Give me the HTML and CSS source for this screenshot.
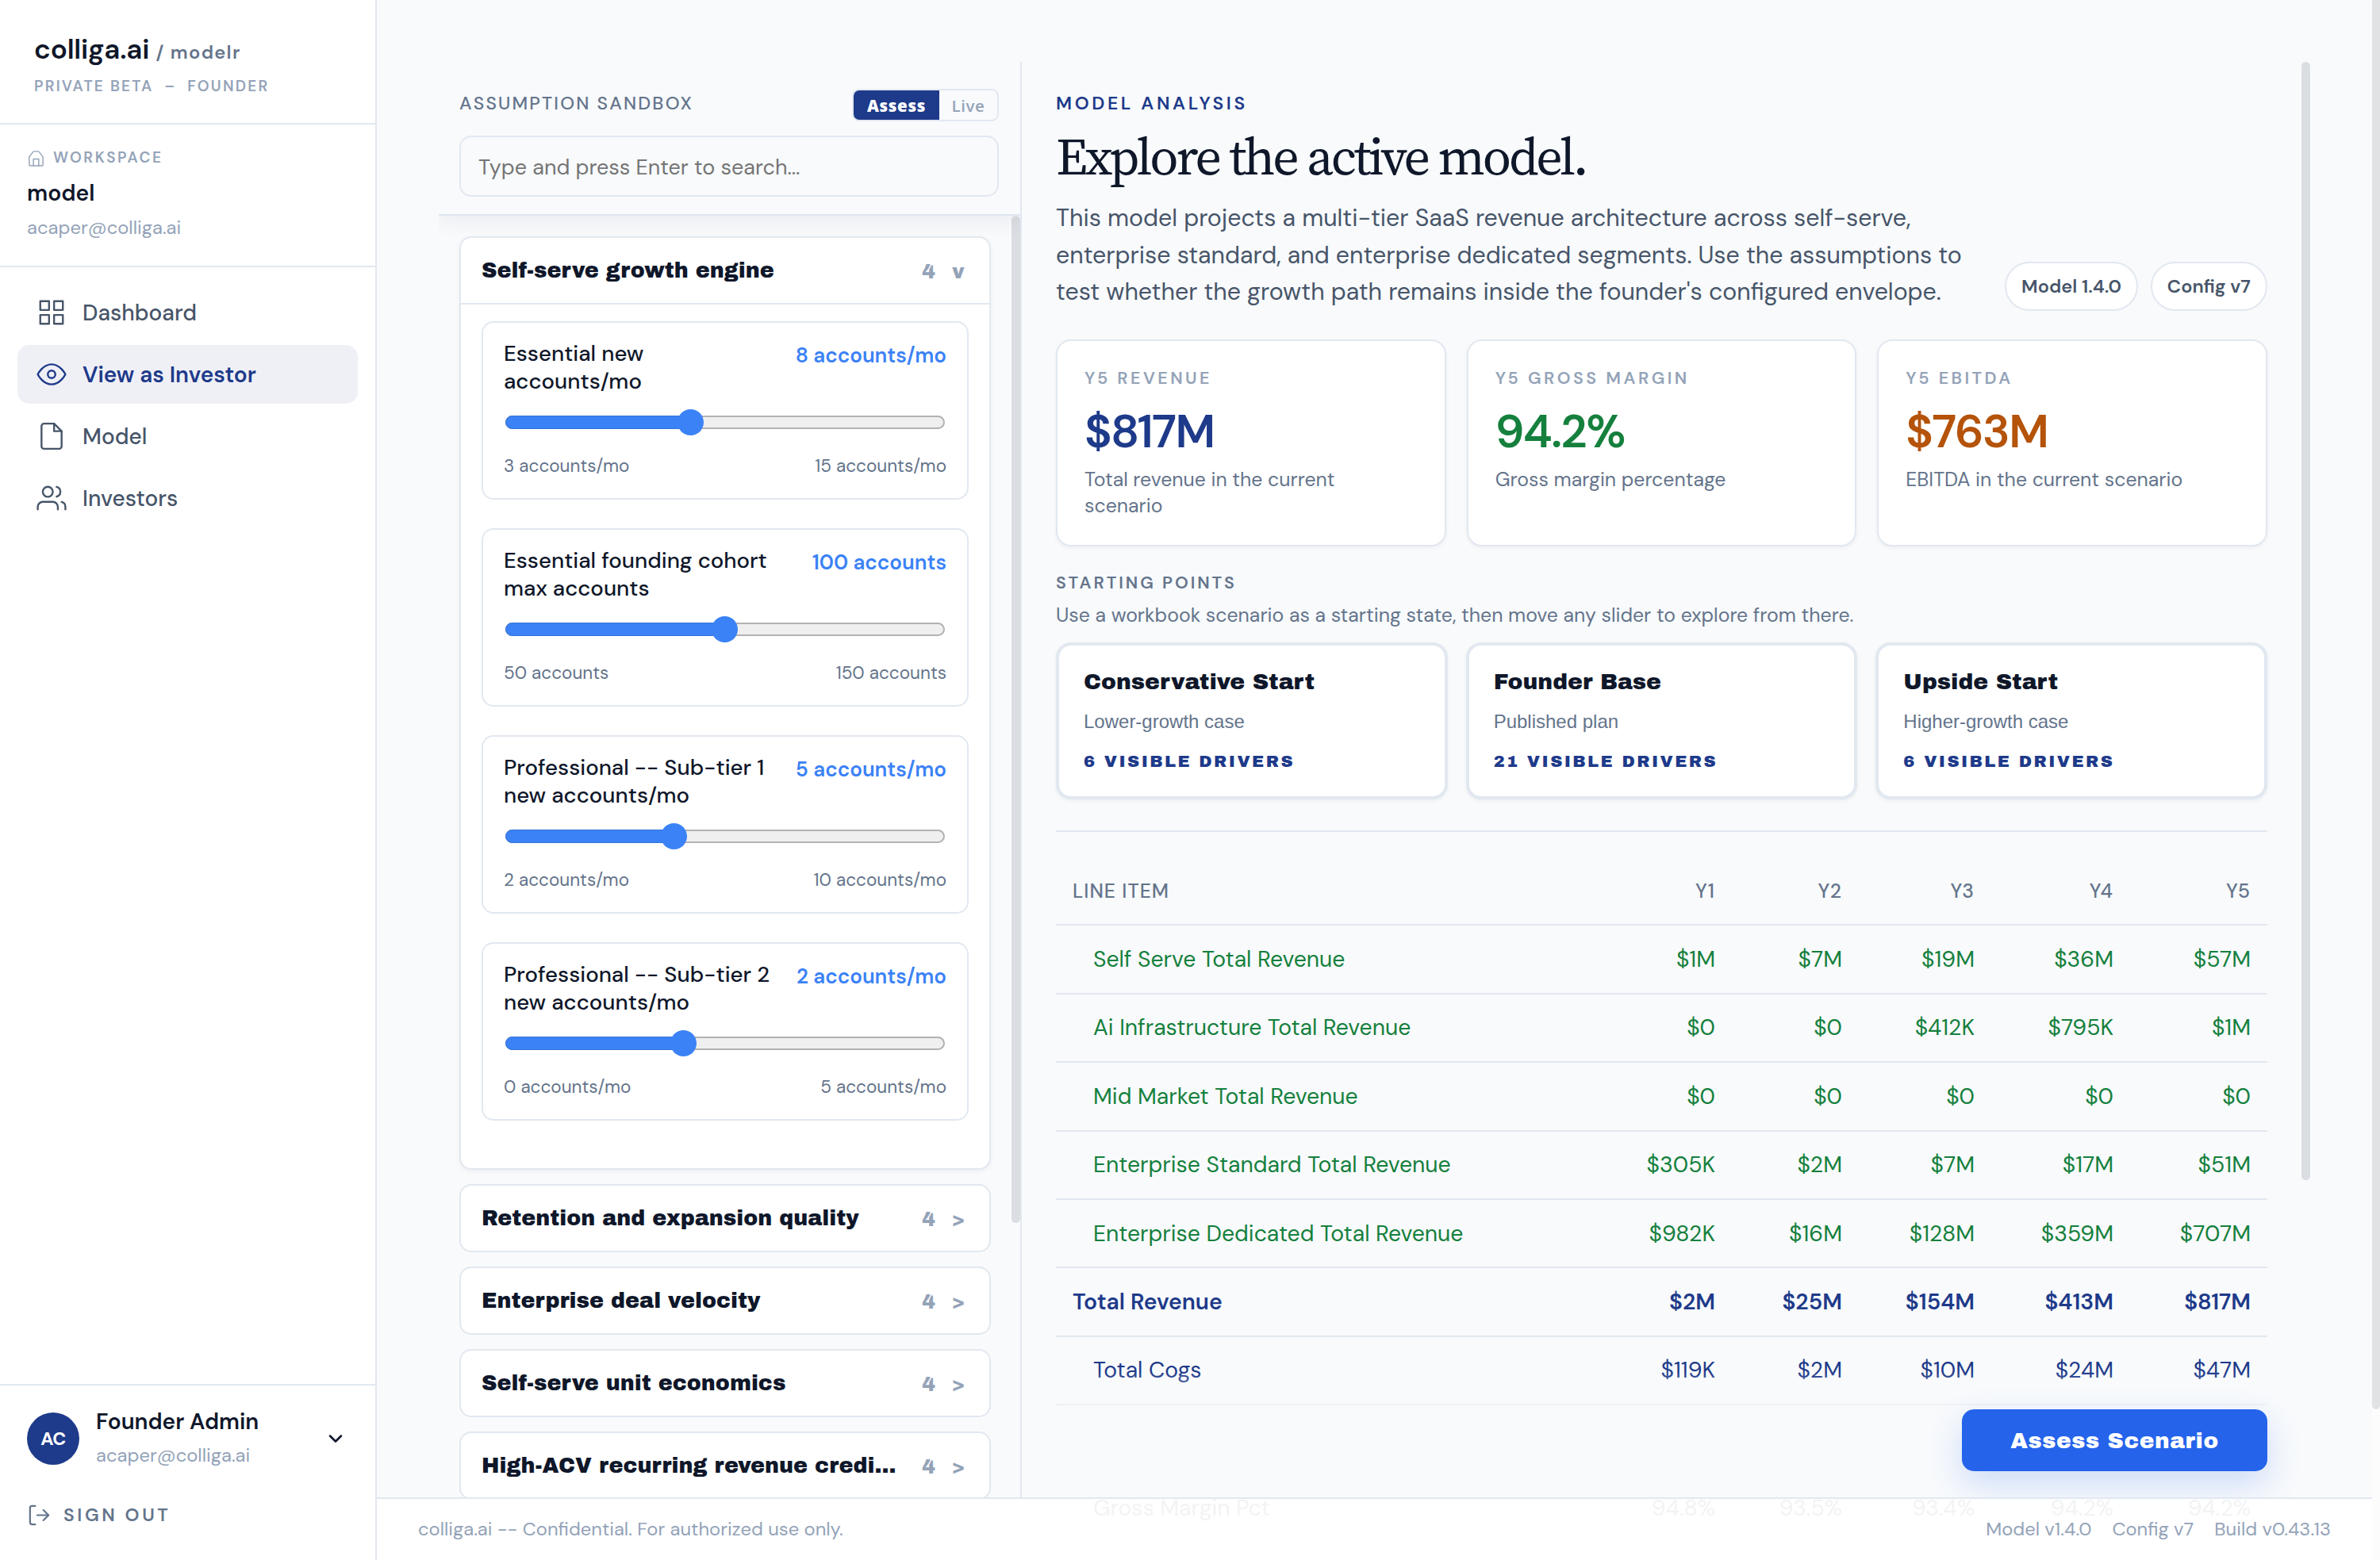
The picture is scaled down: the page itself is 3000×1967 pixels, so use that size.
FILE: index.html
```html
<!DOCTYPE html>
<html lang="en">
<head>
    <meta charset="UTF-8">
    <meta name="viewport" content="width=device-width, initial-scale=1.0">
    <title>colliga.ai / modelr</title>
    <link rel="stylesheet" href="styles.css">
</head>
<body>
    <aside class="sidebar">
        <div class="brand">
            <div class="brand-name">colliga.ai <span>/ modelr</span></div>
            <div class="brand-sub">PRIVATE BETA&nbsp; –&nbsp; FOUNDER</div>
        </div>

        <div class="workspace">
            <div class="workspace-label">
                <svg class="icon-home" viewBox="0 0 24 24"><path d="M3 10l5-6.200a2 2 0 0 1 1.500-.8h5a2 2 0 0 1 1.500.8L21 10v10a2 2 0 0 1-2 2H5a2 2 0 0 1-2-2z"/><path d="M8.500 22v-9h7v9"/></svg>
                WORKSPACE
            </div>
            <div class="workspace-name">model</div>
            <div class="workspace-email">acaper@colliga.ai</div>
        </div>

        <nav class="nav">
            <a class="nav-item">
                <svg viewBox="0 0 24 24"><rect x="3" y="3" width="7" height="7"/><rect x="14" y="3" width="7" height="7"/><rect x="14" y="14" width="7" height="7"/><rect x="3" y="14" width="7" height="7"/></svg>
                Dashboard
            </a>
            <a class="nav-item active">
                <svg viewBox="0 0 24 24"><path d="M1 12s4-8 11-8 11 8 11 8-4 8-11 8-11-8-11-8z"/><circle cx="12" cy="12" r="3"/></svg>
                View as Investor
            </a>
            <a class="nav-item">
                <svg viewBox="0 0 24 24"><path d="M14 2H6a2 2 0 0 0-2 2v16a2 2 0 0 0 2 2h12a2 2 0 0 0 2-2V8z"/><polyline points="14 2 14 8 20 8"/></svg>
                Model
            </a>
            <a class="nav-item">
                <svg viewBox="0 0 24 24"><path d="M17 21v-2a4 4 0 0 0-4-4H5a4 4 0 0 0-4 4v2"/><circle cx="9" cy="7" r="4"/><path d="M23 21v-2a4 4 0 0 0-3-3.870"/><path d="M16 3.130a4 4 0 0 1 0 7.750"/></svg>
                Investors
            </a>
        </nav>

        <div class="account">
            <div class="account-row">
                <div class="avatar">AC</div>
                <div class="account-info">
                    <div class="account-name">Founder Admin</div>
                    <div class="account-email">acaper@colliga.ai</div>
                </div>
                <svg class="icon-chevron" viewBox="0 0 24 24"><polyline points="6 9 12 15 18 9"/></svg>
            </div>
            <div class="sign-out">
                <svg viewBox="0 0 24 24"><path d="M8 21H5a2 2 0 0 1-2-2V5a2 2 0 0 1 2-2h3"/><polyline points="16 17 21 12 16 7"/><line x1="21" y1="12" x2="10" y2="12"/></svg>
                SIGN OUT
            </div>
        </div>
    </aside>

    <main class="main">
        <section class="sandbox">
            <div class="sandbox-header">
                <div class="sandbox-title-row">
                    <div class="sandbox-title">ASSUMPTION SANDBOX</div>
                    <div class="toggle"><span class="toggle-on">Assess</span><span class="toggle-off">Live</span></div>
                </div>
                <input class="search" type="text" placeholder="Type and press Enter to search...">
            </div>
            <div class="groups">
                <div class="group group-open">
                    <div class="group-header"><span class="group-name">Self-serve growth engine</span><span class="count">4</span><span class="caret">v</span></div>
                    <div class="group-body">
                        <div class="driver">
                            <div class="driver-top"><span class="driver-label">Essential new<br>accounts/mo</span><span class="driver-value">8 accounts/mo</span></div>
                            <div class="track"><div class="fill" style="width: 42.2%"></div><div class="thumb" style="left: 42.2%"></div></div>
                            <div class="range"><span>3 accounts/mo</span><span>15 accounts/mo</span></div>
                        </div>
                        <div class="driver">
                            <div class="driver-top"><span class="driver-label">Essential founding cohort<br>max accounts</span><span class="driver-value">100 accounts</span></div>
                            <div class="track"><div class="fill" style="width: 50%"></div><div class="thumb" style="left: 50%"></div></div>
                            <div class="range"><span>50 accounts</span><span>150 accounts</span></div>
                        </div>
                        <div class="driver">
                            <div class="driver-top"><span class="driver-label">Professional -- Sub-tier 1<br>new accounts/mo</span><span class="driver-value">5 accounts/mo</span></div>
                            <div class="track"><div class="fill" style="width: 38.3%"></div><div class="thumb" style="left: 38.3%"></div></div>
                            <div class="range"><span>2 accounts/mo</span><span>10 accounts/mo</span></div>
                        </div>
                        <div class="driver">
                            <div class="driver-top"><span class="driver-label">Professional -- Sub-tier 2<br>new accounts/mo</span><span class="driver-value">2 accounts/mo</span></div>
                            <div class="track"><div class="fill" style="width: 40.6%"></div><div class="thumb" style="left: 40.6%"></div></div>
                            <div class="range"><span>0 accounts/mo</span><span>5 accounts/mo</span></div>
                        </div>
                    </div>
                </div>
                <div class="group"><div class="group-header"><span class="group-name">Retention and expansion quality</span><span class="count">4</span><span class="caret">&gt;</span></div></div>
                <div class="group"><div class="group-header"><span class="group-name">Enterprise deal velocity</span><span class="count">4</span><span class="caret">&gt;</span></div></div>
                <div class="group"><div class="group-header"><span class="group-name">Self-serve unit economics</span><span class="count">4</span><span class="caret">&gt;</span></div></div>
                <div class="group"><div class="group-header"><span class="group-name">High-ACV recurring revenue credi...</span><span class="count">4</span><span class="caret">&gt;</span></div></div>
            </div>
            <div class="scrollbar sandbox-scroll"></div>
        </section>

        <section class="analysis">
            <div class="eyebrow">MODEL ANALYSIS</div>
            <h1>Explore the active model.</h1>
            <div class="intro">
                <p>This model projects a multi-tier SaaS revenue architecture across self-serve, enterprise standard, and enterprise dedicated segments. Use the assumptions to test whether the growth path remains inside the founder's configured envelope.</p>
                <div class="pills"><span>Model 1.4.0</span><span>Config v7</span></div>
            </div>

            <div class="metrics">
                <div class="metric">
                    <div class="metric-label">Y5 REVENUE</div>
                    <div class="metric-value blue">$817M</div>
                    <div class="metric-sub">Total revenue in the current<br>scenario</div>
                </div>
                <div class="metric">
                    <div class="metric-label">Y5 GROSS MARGIN</div>
                    <div class="metric-value green">94.2%</div>
                    <div class="metric-sub">Gross margin percentage</div>
                </div>
                <div class="metric">
                    <div class="metric-label">Y5 EBITDA</div>
                    <div class="metric-value orange">$763M</div>
                    <div class="metric-sub">EBITDA in the current scenario</div>
                </div>
            </div>

            <div class="starting-title">STARTING POINTS</div>
            <div class="starting-sub">Use a workbook scenario as a starting state, then move any slider to explore from there.</div>
            <div class="starts">
                <div class="start">
                    <div class="start-name">Conservative Start</div>
                    <div class="start-sub">Lower-growth case</div>
                    <div class="start-drivers">6 VISIBLE DRIVERS</div>
                </div>
                <div class="start">
                    <div class="start-name">Founder Base</div>
                    <div class="start-sub">Published plan</div>
                    <div class="start-drivers">21 VISIBLE DRIVERS</div>
                </div>
                <div class="start">
                    <div class="start-name">Upside Start</div>
                    <div class="start-sub">Higher-growth case</div>
                    <div class="start-drivers">6 VISIBLE DRIVERS</div>
                </div>
            </div>

            <div class="table-wrap">
                <table>
                    <colgroup><col class="col-item"><col class="col-y1"><col class="col-y2"><col class="col-y3"><col class="col-y4"><col class="col-y5"></colgroup>
                    <thead>
                        <tr><th>LINE ITEM</th><th>Y1</th><th>Y2</th><th>Y3</th><th>Y4</th><th>Y5</th></tr>
                    </thead>
                    <tbody>
                        <tr class="rev"><td>Self Serve Total Revenue</td><td>$1M</td><td>$7M</td><td>$19M</td><td>$36M</td><td>$57M</td></tr>
                        <tr class="rev"><td>Ai Infrastructure Total Revenue</td><td>$0</td><td>$0</td><td>$412K</td><td>$795K</td><td>$1M</td></tr>
                        <tr class="rev"><td>Mid Market Total Revenue</td><td>$0</td><td>$0</td><td>$0</td><td>$0</td><td>$0</td></tr>
                        <tr class="rev"><td>Enterprise Standard Total Revenue</td><td>$305K</td><td>$2M</td><td>$7M</td><td>$17M</td><td>$51M</td></tr>
                        <tr class="rev"><td>Enterprise Dedicated Total Revenue</td><td>$982K</td><td>$16M</td><td>$128M</td><td>$359M</td><td>$707M</td></tr>
                        <tr class="total"><td>Total Revenue</td><td>$2M</td><td>$25M</td><td>$154M</td><td>$413M</td><td>$817M</td></tr>
                        <tr class="cost"><td>Total Cogs</td><td>$119K</td><td>$2M</td><td>$10M</td><td>$24M</td><td>$47M</td></tr>
                        <tr class="spacer"><td colspan="6"></td></tr>
                        <tr class="pct"><td>Gross Margin Pct</td><td>94.8%</td><td>93.5%</td><td>93.4%</td><td>94.2%</td><td>94.2%</td></tr>
                    </tbody>
                </table>
            </div>
        </section>

        <div class="scrollbar analysis-scroll"></div>
        <div class="assess-bar"><button class="assess-btn">Assess Scenario</button></div>

        <footer class="footer">
            <span>colliga.ai -- Confidential. For authorized use only.</span>
            <div class="versions"><span>Model v1.4.0</span><span>Config v7</span><span>Build v0.43.13</span></div>
        </footer>
    </main>

    <div class="page-scroll"><div class="page-thumb"></div></div>
</body>
</html>
```
FILE: styles.css
```css
* {
    box-sizing: border-box;
}
body {
    margin: 0;
    height: 1967px;
    display: flex;
    overflow: hidden;
    background-color: #f8fafc;
    color: #0f172a;
    font-family: "DM Sans", Inter, sans-serif;
    font-optical-sizing: auto;
}
svg {
    fill: none;
    stroke: currentColor;
    stroke-width: 1.5;
    stroke-linecap: round;
    stroke-linejoin: round;
    flex: none;
}

/* Sidebar */
.sidebar {
    width: 475px;
    flex: none;
    display: flex;
    flex-direction: column;
    background-color: #fff;
    border-right: 2px solid #e2e8f0;
}
.brand {
    height: 157px;
    padding: 39px 0 0 43px;
    border-bottom: 2px solid #e2e8f0;
}
.brand-name {
    font-size: 35px;
    line-height: 46px;
    font-weight: 600;
    letter-spacing: -0.2px;
}
.brand-name span {
    font-size: 23.7px;
    letter-spacing: 1.3px;
    color: #64748b;
}
.brand-sub {
    margin-top: 6px;
    font-size: 19px;
    line-height: 28px;
    font-weight: 600;
    letter-spacing: 2.2px;
    color: #94a3b8;
}
.workspace {
    height: 180px;
    padding: 28px 0 0 34px;
    border-bottom: 2px solid #e2e8f0;
}
.workspace-label {
    display: flex;
    align-items: center;
    gap: 10px;
    font-size: 19px;
    line-height: 28px;
    font-weight: 600;
    letter-spacing: 2.5px;
    color: #94a3b8;
}
.icon-home {
    width: 23px;
    height: 23px;
}
.workspace-name {
    margin-top: 13px;
    font-size: 28.3px;
    line-height: 36px;
    font-weight: 600;
}
.workspace-email {
    margin-top: 9px;
    font-size: 23.8px;
    line-height: 32px;
    color: #94a3b8;
}
.nav {
    flex: 1;
    display: flex;
    flex-direction: column;
    gap: 4px;
    padding: 20px 22px 0;
}
.nav-item {
    display: flex;
    align-items: center;
    gap: 20px;
    height: 74px;
    padding-left: 24px;
    border-radius: 15px;
    font-size: 28px;
    font-weight: 500;
    color: #475569;
}
.nav-item svg {
    width: 38px;
    height: 38px;
}
.nav-item.active {
    background-color: #eff0f6;
    color: #1e3a8a;
    font-weight: 600;
}
.account {
    height: 222px;
    padding: 25px 34px 0;
    border-top: 2px solid #e2e8f0;
}
.account-row {
    display: flex;
    align-items: center;
}
.avatar {
    width: 66px;
    height: 66px;
    border-radius: 50%;
    background-color: #1e3a8a;
    color: #fff;
    font-size: 23px;
    font-weight: 700;
    letter-spacing: -0.5px;
    line-height: 66px;
    text-align: center;
}
.account-info {
    flex: 1;
    margin-left: 21px;
}
.account-name {
    font-size: 28px;
    line-height: 42px;
    font-weight: 600;
}
.account-email {
    font-size: 23.8px;
    line-height: 42px;
    color: #94a3b8;
}
.icon-chevron {
    width: 28px;
    height: 28px;
    margin-right: 2px;
    stroke-width: 2.2;
}
.sign-out {
    display: flex;
    align-items: center;
    gap: 15px;
    margin-top: 37px;
    font-size: 23px;
    line-height: 34px;
    font-weight: 600;
    letter-spacing: 3.6px;
    color: #64748b;
}
.sign-out svg {
    width: 31px;
    height: 31px;
    stroke-width: 1.7;
}

/* Main area */
.main {
    position: relative;
    width: 2515px;
    height: 1967px;
    display: flex;
    overflow: hidden;
    padding: 78px 0 0 78px;
}
.scrollbar {
    position: absolute;
    width: 11px;
    border-radius: 6px;
    background-color: #dadee2;
}

/* Sandbox */
.sandbox {
    position: relative;
    width: 735px;
    height: 1811px;
    flex: none;
    overflow: hidden;
    border-right: 2px solid #e2e8f0;
}
.sandbox-header {
    position: relative;
    z-index: 1;
    height: 194px;
    padding: 34px 27px 0 26px;
    border-bottom: 2px solid #dfe6ee;
    background-color: #f8fafc;
    box-shadow: 0 10px 22px rgba(15, 23, 42, 0.05);
}
.sandbox-title-row {
    display: flex;
    justify-content: space-between;
    height: 41px;
}
.sandbox-title {
    font-size: 23px;
    line-height: 37px;
    font-weight: 500;
    letter-spacing: 2.15px;
    color: #64748b;
}
.toggle {
    display: flex;
    height: 41px;
    border: 2px solid #e2e8f0;
    border-radius: 9px;
    overflow: hidden;
    font-family: "Open Sans", sans-serif;
    font-size: 20.5px;
    line-height: 38px;
    text-align: center;
}
.toggle-on {
    width: 108px;
    background-color: #1e3a8a;
    color: #fff;
    font-weight: 800;
    letter-spacing: 0.7px;
}
.toggle-off {
    width: 73px;
    color: #94a3b8;
    font-weight: 600;
    letter-spacing: 0.6px;
}
.search {
    display: block;
    width: 100%;
    height: 77px;
    margin-top: 18px;
    padding: 2px 22px 0;
    border: 2px solid #e2e8f0;
    border-radius: 15px;
    background-color: transparent;
    font-family: inherit;
    font-size: 27px;
}
.search::placeholder {
    color: #757575;
}
.groups {
    display: flex;
    flex-direction: column;
    gap: 18px;
    width: 696px;
    padding: 26px 0 0 26px;
}
.group {
    flex: none;
    border: 2px solid #e2e8f0;
    border-radius: 15px;
    background-color: #fff;
}
.group-open {
    box-shadow: 0 2px 6px rgba(15, 23, 42, 0.05);
}
.group-header {
    display: flex;
    align-items: center;
    height: 82px;
    padding: 0 30px 0 26px;
    font-family: "Archivo Black", "Liberation Sans", sans-serif;
    font-size: 27px;
}
.group-name {
    flex: 1;
}
.count,
.caret {
    margin-top: 3px;
    font-size: 25px;
    color: #94a3b8;
}
.caret {
    width: 18px;
    margin-left: 20px;
    text-align: center;
}
.group-body {
    display: flex;
    flex-direction: column;
    gap: 36px;
    padding: 21px 26px 60px;
    border-top: 2px solid #e2e8f0;
}
.driver {
    height: 225px;
    padding: 22px 26px 0;
    border: 2px solid #e2e8f0;
    border-radius: 15px;
}
.driver-top {
    display: flex;
    justify-content: space-between;
    font-size: 27.6px;
    line-height: 34.5px;
    font-weight: 500;
}
.driver-label {
    white-space: nowrap;
}
.driver-value {
    padding-top: 2px;
    font-size: 26px;
    font-weight: 600;
    color: #3b82f6;
}
.track {
    position: relative;
    height: 17px;
    margin: 26px 2px 0;
    border: 2px solid #b2b2b2;
    border-radius: 9px;
    background-color: #efefef;
}
.fill {
    height: 17px;
    margin: -2px 0 0 -2px;
    border: 1px solid #3572d4;
    border-radius: 9px 0 0 9px;
    background-color: #3b82f6;
}
.thumb {
    position: absolute;
    top: -10px;
    width: 33px;
    height: 33px;
    margin-left: -17px;
    border-radius: 50%;
    background-color: #3b82f6;
}
.range {
    display: flex;
    justify-content: space-between;
    margin-top: 33px;
    font-size: 22.5px;
    line-height: 28px;
    color: #64748b;
}
.sandbox-scroll {
    right: 0;
    top: 194px;
    height: 1270px;
}

/* Analysis */
.analysis {
    width: 1527px;
    margin-left: 43px;
    padding-top: 37px;
}
.eyebrow {
    font-size: 23px;
    line-height: 30px;
    font-weight: 600;
    letter-spacing: 3.6px;
    color: #1e3a8a;
}
h1 {
    margin: 17px 0 20px;
    font-family: "Source Serif 4", "Liberation Serif", serif;
    font-size: 66px;
    line-height: 70px;
    font-weight: 400;
    letter-spacing: -3.1px;
}
.intro {
    display: flex;
    justify-content: space-between;
    align-items: flex-end;
    height: 140px;
}
.intro p {
    width: 1165px;
    margin: 0;
    font-size: 30.35px;
    line-height: 46.7px;
    color: #475569;
}
.pills {
    display: flex;
    gap: 16px;
}
.pills span {
    height: 62px;
    padding: 0 19px;
    border: 2px solid #e2e8f0;
    border-radius: 32px;
    background-color: #fff;
    font-size: 23.6px;
    line-height: 59px;
    font-weight: 600;
    color: #475569;
}
.metrics {
    display: grid;
    grid-template-columns: repeat(3, 1fr);
    gap: 26px;
    margin-top: 36px;
}
.metric {
    height: 261px;
    padding: 33px 34px 0;
    border: 2px solid #e2e8f0;
    border-radius: 19px;
    background-color: #fff;
    box-shadow: 0 2px 5px rgba(15, 23, 42, 0.05);
}
.metric-label {
    font-size: 21.5px;
    line-height: 28px;
    font-weight: 600;
    letter-spacing: 3.45px;
    color: #94a3b8;
}
.metric-value {
    margin-top: 23px;
    font-size: 58px;
    line-height: 60px;
    font-weight: 600;
    letter-spacing: -1.6px;
}
.metric-sub {
    margin-top: 14px;
    font-size: 24.85px;
    line-height: 33px;
    color: #64748b;
}
.blue {
    color: #1e3a8a;
}
.green {
    color: #15803d;
}
.orange {
    color: #b45309;
}
.starting-title {
    margin-top: 32px;
    font-size: 21.5px;
    line-height: 28px;
    font-weight: 600;
    letter-spacing: 2.95px;
    color: #64748b;
}
.starting-sub {
    margin-top: 11px;
    font-size: 24.87px;
    line-height: 32px;
    color: #64748b;
}
.starts {
    display: grid;
    grid-template-columns: repeat(3, 1fr);
    gap: 23px;
    margin-top: 18px;
}
.start {
    height: 198px;
    padding: 30px 31px 0;
    border: 4px solid #e2e8f0;
    border-radius: 19px;
    background-color: #fff;
    box-shadow: 0 2px 5px rgba(15, 23, 42, 0.05);
    font-family: "Archivo Black", "Liberation Sans", sans-serif;
}
.start-name {
    font-size: 28.3px;
    line-height: 32px;
}
.start-sub {
    margin-top: 20px;
    font-family: "Liberation Sans", Arial, sans-serif;
    font-size: 24px;
    line-height: 28px;
    color: #64748b;
}
.start-drivers {
    margin-top: 24px;
    font-size: 21px;
    line-height: 24px;
    letter-spacing: 2.4px;
    color: #1e3a8a;
}
.table-wrap {
    margin-top: 39px;
    padding-top: 32px;
    border-top: 2px solid #e2e8f0;
}
table {
    width: 1527px;
    table-layout: fixed;
    border-collapse: separate;
    border-spacing: 0;
    font-size: 28.35px;
}
.col-item {
    width: 652px;
}
.col-y1 {
    width: 200px;
}
.col-y2 {
    width: 160px;
}
.col-y3 {
    width: 167px;
}
.col-y4 {
    width: 175px;
}
.col-y5 {
    width: 173px;
}
th,
td {
    height: 86.4px;
    padding: 0 21px;
    border-bottom: 2px solid #e2e8f0;
    text-align: right;
}
th {
    font-size: 24.8px;
    font-weight: 500;
    letter-spacing: 1px;
    color: #64748b;
}
th:first-child,
td:first-child {
    text-align: left;
}
td:first-child {
    padding-left: 47px;
}
.rev {
    color: #15803d;
}
.total,
.cost {
    color: #1e3a8a;
}
.total {
    font-weight: 600;
}
.total td:first-child {
    padding-left: 21px;
}
.pct {
    color: #475569;
}
.spacer td,
.pct td {
    border-bottom: none;
}
.analysis-scroll {
    left: 2426px;
    top: 78px;
    height: 1410px;
}

/* Bars over the content */
.assess-bar {
    position: absolute;
    left: 857px;
    right: 132px;
    bottom: 78px;
    height: 160px;
    padding-top: 48px;
    text-align: right;
    background: linear-gradient(rgba(248, 250, 252, 0), #f8fafc 45%);
}
.assess-btn {
    width: 385px;
    height: 78px;
    border: none;
    border-radius: 15px;
    background-color: #2563eb;
    box-shadow: 0 16px 44px rgba(37, 99, 235, 0.2);
    color: #fff;
    font-family: "Archivo Black", "Liberation Sans", sans-serif;
    font-size: 28px;
    letter-spacing: 0.6px;
}
.footer {
    position: absolute;
    left: 0;
    right: 0;
    bottom: 0;
    height: 79px;
    display: flex;
    justify-content: space-between;
    align-items: center;
    padding: 0 52px 3px;
    border-top: 2px solid #e2e8f0;
    background-color: rgba(255, 255, 255, 0.93);
    font-size: 23.75px;
    color: #94a3b8;
}
.versions {
    display: flex;
    gap: 26px;
}

.page-scroll {
    width: 10px;
    background-color: #fcfcfd;
}
.page-thumb {
    height: 1777px;
    border-radius: 0 0 5px 5px;
    background-color: #e1e2e4;
}
```
